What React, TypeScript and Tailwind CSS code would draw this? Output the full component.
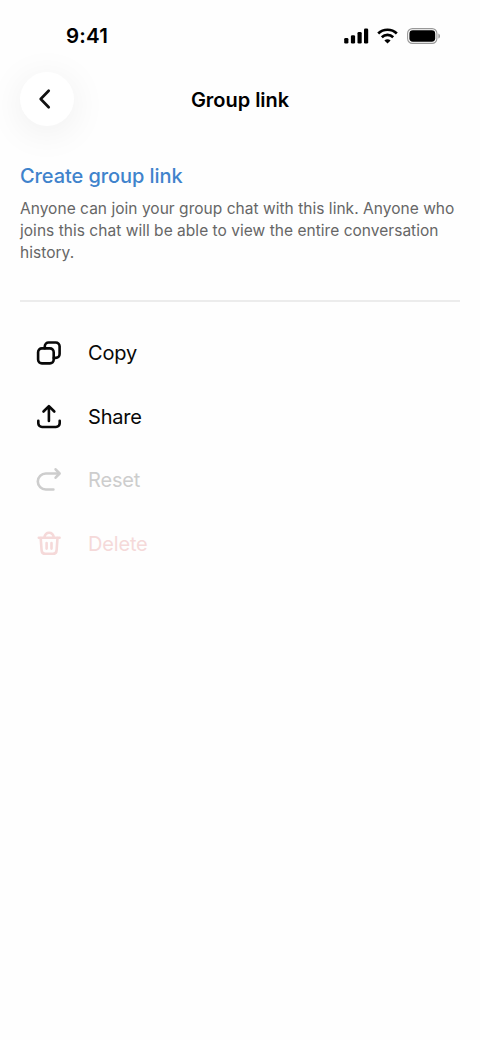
import type { ReactNode } from "react";

const icons = {
  copy: (
    <>
      <rect x="6.1" y="11.4" width="15.6" height="15" rx="3.8" />
      <path d="M12.8 11.2V9.3a3.8 3.8 0 0 1 3.8-3.8h7.2a3.8 3.8 0 0 1 3.8 3.8v7.8a3.8 3.8 0 0 1-3.8 3.8h-2" />
    </>
  ),
  share: (
    <>
      <path d="M16.9 20V5.3M11.5 10.5l5.4-5.4 5.4 5.4" />
      <path d="M6.3 19.7v2.6a3.7 3.7 0 0 0 3.7 3.7h14a3.7 3.7 0 0 0 3.7-3.7v-2.6" />
    </>
  ),
  reset: (
    <>
      <path d="M27 9.5H13.8a8 8 0 0 0 0 16h7.6" />
      <path d="M23.6 5.3l4 4.2-4 4.2" />
    </>
  ),
  trash: (
    <>
      <path d="M6.8 9.7h20.8M12.3 9.5c.6-3 2.1-4.7 4.8-4.7s4.2 1.7 4.8 4.7" />
      <path d="M8.7 10l.9 12.3a3.8 3.8 0 0 0 3.8 3.5h7.4a3.8 3.8 0 0 0 3.8-3.5l.9-12.3M14.6 15v5.6M19.5 15v5.6" />
    </>
  ),
};

type Action = {
  label: string;
  icon: ReactNode;
  color: string;
  disabled?: boolean;
};

const actions: Action[] = [
  { label: "Copy", icon: icons.copy, color: "text-[#080808]" },
  { label: "Share", icon: icons.share, color: "text-[#080808]" },
  { label: "Reset", icon: icons.reset, color: "text-[#cdcdcd]", disabled: true },
  { label: "Delete", icon: icons.trash, color: "text-[#f5d9d9]", disabled: true },
];

const StatusBar = () => (
  <div className="flex h-[72px] items-center justify-between pl-[66px] pr-[39px]">
    <span className="text-[20.5px] font-semibold tracking-[0.2px]">9:41</span>
    <div className="flex items-center">
      <svg width="25" height="16" viewBox="0 0 25 16" fill="currentColor">
        <rect x="0.2" y="10" width="4.2" height="5.5" rx="1.3" />
        <rect x="6.9" y="7.3" width="4.2" height="8.2" rx="1.3" />
        <rect x="13.5" y="4" width="4.2" height="11.5" rx="1.3" />
        <rect x="20" y="0.5" width="4.2" height="15" rx="1.3" />
      </svg>
      <svg
        className="ml-2"
        width="21"
        height="16"
        viewBox="0 0 21 16"
        fill="none"
        stroke="currentColor"
        strokeWidth="2.7"
      >
        <path d="M1.2 5.5c5.2-5 13.4-5 18.6 0" />
        <path d="M4.8 9.2c3.2-3 8.2-3 11.4 0" />
        <path
          d="M7.4 12.4c1.8-1.6 4.4-1.6 6.2 0l-3.1 3z"
          fill="currentColor"
          stroke="none"
        />
      </svg>
      <svg className="ml-[9px]" width="34" height="16" viewBox="0 0 34 16">
        <rect
          x="0.6"
          y="0.6"
          width="29.3"
          height="14.8"
          rx="4.8"
          fill="none"
          stroke="#999"
          strokeWidth="1.1"
        />
        <rect x="2.4" y="2.3" width="25.8" height="11.4" rx="3.4" />
        <path d="M31.4 5.4c2.1.8 2.1 4.4 0 5.2z" fill="#999" />
      </svg>
    </div>
  </div>
);

const App = () => {
  return (
    <div className="h-[1040px] w-[480px] overflow-hidden bg-[#fefefe] font-[Inter,sans-serif] text-black">
      <StatusBar />
      <header className="grid h-[54px] grid-cols-[54px_1fr_54px] items-center px-5">
        <button
          aria-label="Back"
          className="flex size-[54px] items-center justify-center rounded-full bg-white shadow-[0_6px_38px_rgba(0,0,0,0.07)]"
        >
          <svg
            width="24"
            height="24"
            viewBox="0 0 24 24"
            fill="none"
            stroke="#111"
            strokeWidth="2.7"
            strokeLinecap="round"
            strokeLinejoin="round"
            className="mr-1"
          >
            <path d="M15.7 3.8L7.7 12l8 8.2" />
          </svg>
        </button>
        <h1 className="pt-px text-center text-[20px] font-semibold tracking-[-0.03px]">
          Group link
        </h1>
      </header>
      <main className="px-5 pt-9">
        <button className="block text-[20px] font-medium leading-7 tracking-[-0.08px] text-[#3f83cc]">
          Create group link
        </button>
        <p className="mt-2 text-[15.5px] leading-[22px] tracking-[0.03px] text-[#666]">
          Anyone can join your group chat with this link. Anyone who joins this
          chat will be able to view the entire conversation history.
        </p>
        <hr className="mt-9 border-t-2 border-[#ececec]" />
        <div className="pt-[19.5px]">
          {actions.map((action) => (
            <button
              key={action.label}
              disabled={action.disabled}
              className={`flex h-[63.6px] w-full items-center gap-6 pl-3 ${action.color}`}
            >
              <svg
                width="32"
                height="32"
                viewBox="0 0 32 32"
                fill="none"
                stroke="currentColor"
                strokeWidth="2.6"
                strokeLinecap="round"
                strokeLinejoin="round"
              >
                {action.icon}
              </svg>
              <span className="text-[20px] tracking-[-0.18px]">
                {action.label}
              </span>
            </button>
          ))}
        </div>
      </main>
    </div>
  );
};

export default App;
